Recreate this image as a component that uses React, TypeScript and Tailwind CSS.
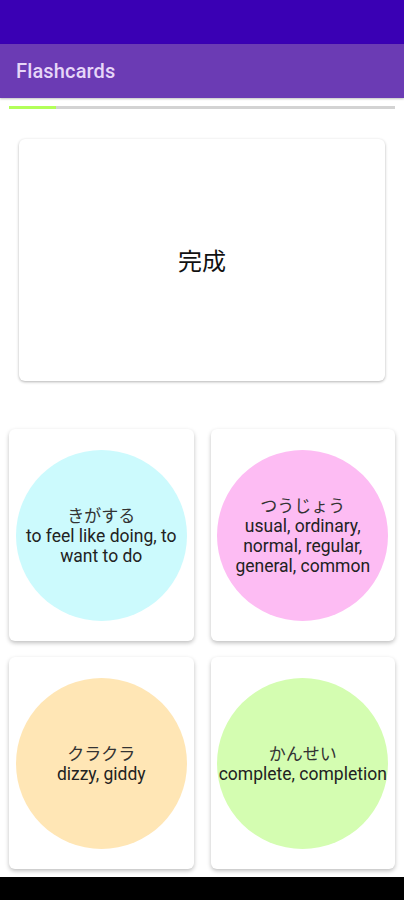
import React from "react";

const cards = [
  { kana: "きがする", en: "to feel like doing, to want to do", bg: "bg-[#ccfafd]" },
  { kana: "つうじょう", en: "usual, ordinary, normal, regular, general, common", bg: "bg-[#fdbcf3]" },
  { kana: "クラクラ", en: "dizzy, giddy", bg: "bg-[#ffe6b5]" },
  { kana: "かんせい", en: "complete, completion", bg: "bg-[#d4fdb1]" },
];

export default function App() {
  return (
    <div
      className="w-[404px] h-[900px] flex flex-col bg-white overflow-hidden"
      style={{ fontFamily: "Roboto, 'Noto Sans CJK JP', sans-serif" }}
    >
      <div className="h-[44px] bg-[#3a00b4] shrink-0" />
      <div className="h-[54px] bg-[#6b3bb4] shrink-0 flex items-center px-4 shadow-[0_1px_2px_rgba(0,0,0,0.25)]">
        <span className="text-[20px] font-medium text-[#e6d6f8] tracking-[0.15px]">Flashcards</span>
      </div>
      <div className="mt-[8px] mx-[9px] h-[3px] bg-[#d3d3d3] flex shrink-0">
        <div className="w-[47px] bg-[#b2ff59]" />
      </div>
      <div className="mt-[30px] mx-[19px] h-[242px] shrink-0 bg-white rounded-md shadow-[0_1px_3px_rgba(0,0,0,0.3)] flex items-center justify-center">
        <span className="text-[24px] text-[#111]" style={{ fontFamily: "'Noto Sans CJK JP', sans-serif" }}>完成</span>
      </div>
      <div className="flex-1 overflow-hidden pt-[48px] px-[9px]">
        <div className="grid grid-cols-2 gap-x-[17px] gap-y-[16px]">
          {cards.map((c) => (
            <div
              key={c.kana}
              className="h-[212px] bg-white rounded-md shadow-[0_2px_4px_rgba(0,0,0,0.25)] flex items-center justify-center"
            >
              <div className={`w-[171px] h-[171px] rounded-full ${c.bg} flex flex-col items-center justify-center text-center text-[#222]`}>
                <div className="text-[17px] leading-[22px] text-[#333]" style={{ fontFamily: "'Noto Sans CJK JP', sans-serif" }}>{c.kana}</div>
                <div className="text-[17.5px] leading-[20px] w-[171px]">{c.en}</div>
              </div>
            </div>
          ))}
        </div>
      </div>
      <div className="h-[23px] bg-black shrink-0" />
    </div>
  );
}
